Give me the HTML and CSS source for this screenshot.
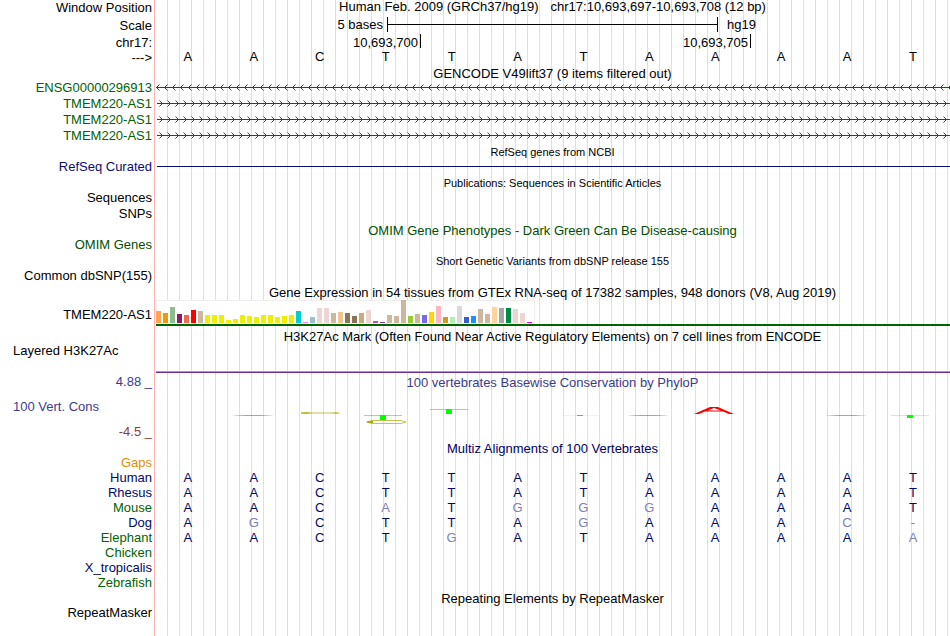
FILE: index.html
```
<!DOCTYPE html>
<html lang="en">
<head>
  <meta charset="UTF-8">
  <meta name="viewport" content="width=device-width, initial-scale=1.0">
  <title>Genome Browser - chr17:10,693,697-10,693,708</title>
  <link rel="stylesheet" href="styles.css">
</head>
<body>
<main class="browser">

  <!-- shared arrow patterns and gradients -->
  <svg class="defs" width="0" height="0">
    <defs>
      <pattern id="arrowLeft" width="8" height="16" patternUnits="userSpaceOnUse">
        <path d="M0 8h8v1H0z M2 7h1v1H2z M3 6h1v1H3z M2 9h1v1H2z M3 10h1v1H3z" fill="#006400"/>
        <path d="M4 5h1v1H4z M4 11h1v1H4z" fill="#006400" opacity=".5"/>
      </pattern>
      <pattern id="arrowRight" width="8" height="16" patternUnits="userSpaceOnUse">
        <path d="M0 8h8v1H0z M6 7h1v1H6z M5 6h1v1H5z M6 9h1v1H6z M5 10h1v1H5z" fill="#006400"/>
        <path d="M4 5h1v1H4z M4 11h1v1H4z" fill="#006400" opacity=".5"/>
      </pattern>
      <linearGradient id="redFade">
        <stop offset="0" stop-color="#f00" stop-opacity=".1"/>
        <stop offset=".3" stop-color="#f00" stop-opacity=".5"/>
        <stop offset=".7" stop-color="#f00" stop-opacity=".5"/>
        <stop offset="1" stop-color="#f00" stop-opacity=".1"/>
      </linearGradient>
      <linearGradient id="oliveFade">
        <stop offset="0" stop-color="#aa0" stop-opacity=".6"/>
        <stop offset=".15" stop-color="#aa0" stop-opacity=".8"/>
        <stop offset=".3" stop-color="#aa0" stop-opacity=".35"/>
        <stop offset=".8" stop-color="#aa0" stop-opacity=".35"/>
        <stop offset=".9" stop-color="#aa0" stop-opacity=".7"/>
        <stop offset="1" stop-color="#aa0" stop-opacity=".2"/>
      </linearGradient>
    </defs>
  </svg>

  <div class="row position">
    <div class="label">Window Position</div>
    <div class="track heading"><span>Human Feb. 2009 (GRCh37/hg19)</span><span>chr17:10,693,697-10,693,708 (12 bp)</span></div>
  </div>
  <div class="row scale">
    <div class="label">Scale</div>
    <div class="track halves">
      <span class="scale-text">5 bases</span>
      <span class="scale-bar"></span>
      <span class="scale-db">hg19</span>
    </div>
  </div>
  <div class="row">
    <div class="label">chr17:</div>
    <div class="track halves">
      <span class="coord first">10,693,700</span>
      <span class="coord">10,693,705</span>
      <span class="coord rest"></span>
    </div>
  </div>
  <div class="row sequence">
    <div class="label">---&gt;</div>
    <div class="track bases">
      <span>A</span><span>A</span><span>C</span><span>T</span><span>T</span><span>A</span><span>T</span><span>A</span><span>A</span><span>A</span><span>A</span><span>T</span>
    </div>
  </div>

  <h2 class="title">GENCODE V49lift37 (9 items filtered out)</h2>
  <div class="row">
    <div class="label gene">ENSG00000296913</div>
    <div class="track"><svg class="intron"><rect x="1" width="100%" height="16" fill="url(#arrowLeft)"/></svg></div>
  </div>
  <div class="row">
    <div class="label gene">TMEM220-AS1</div>
    <div class="track"><svg class="intron"><rect x="2" width="100%" height="16" fill="url(#arrowRight)"/></svg></div>
  </div>
  <div class="row">
    <div class="label gene">TMEM220-AS1</div>
    <div class="track"><svg class="intron"><rect x="2" width="100%" height="16" fill="url(#arrowRight)"/></svg></div>
  </div>
  <div class="row">
    <div class="label gene">TMEM220-AS1</div>
    <div class="track"><svg class="intron"><rect x="2" width="100%" height="16" fill="url(#arrowRight)"/></svg></div>
  </div>

  <h2 class="title small">RefSeq genes from NCBI</h2>
  <div class="row">
    <div class="label refseq">RefSeq Curated</div>
    <div class="track"><div class="refseq-line"></div></div>
  </div>

  <h2 class="title small">Publications: Sequences in Scientific Articles</h2>
  <div class="row"><div class="label">Sequences</div></div>
  <div class="row"><div class="label">SNPs</div></div>

  <h2 class="title omim">OMIM Gene Phenotypes - Dark Green Can Be Disease-causing</h2>
  <div class="row"><div class="label omim">OMIM Genes</div></div>

  <h2 class="title small">Short Genetic Variants from dbSNP release 155</h2>
  <div class="row"><div class="label">Common dbSNP(155)</div></div>

  <h2 class="title">Gene Expression in 54 tissues from GTEx RNA-seq of 17382 samples, 948 donors (V8, Aug 2019)</h2>
  <div class="row gtex">
    <div class="label">TMEM220-AS1</div>
    <div class="track">
      <svg class="gtex-chart" width="379" height="24" viewBox="0 0 379 24" shape-rendering="crispEdges">
        <rect width="379" height="24" fill="#eee"/>
        <rect x="1" y="1" width="377" height="22" fill="#fff"/>
        <rect x="0" y="11" width="5" height="12" fill="#ffa54f"/>
        <rect x="7" y="13" width="5" height="10" fill="#ee9a00"/>
        <rect x="14" y="7" width="5" height="16" fill="#8fbc8f"/>
        <rect x="21" y="14" width="5" height="9" fill="#8b1c62"/>
        <rect x="28" y="15" width="5" height="8" fill="#ee6a50"/>
        <rect x="35" y="10" width="5" height="13" fill="#ff0000"/>
        <rect x="42" y="11" width="5" height="12" fill="#cdb79e"/>
        <rect x="49" y="15" width="5" height="8" fill="#eeee00"/>
        <rect x="56" y="15" width="5" height="8" fill="#eeee00"/>
        <rect x="63" y="15" width="5" height="8" fill="#eeee00"/>
        <rect x="70" y="20" width="5" height="3" fill="#eeee00"/>
        <rect x="77" y="19" width="5" height="4" fill="#eeee00"/>
        <rect x="84" y="15" width="5" height="8" fill="#eeee00"/>
        <rect x="91" y="16" width="5" height="7" fill="#eeee00"/>
        <rect x="98" y="17" width="5" height="6" fill="#eeee00"/>
        <rect x="105" y="15" width="5" height="8" fill="#eeee00"/>
        <rect x="112" y="15" width="5" height="8" fill="#eeee00"/>
        <rect x="119" y="17" width="5" height="6" fill="#eeee00"/>
        <rect x="126" y="16" width="5" height="7" fill="#eeee00"/>
        <rect x="133" y="15" width="5" height="8" fill="#eeee00"/>
        <rect x="140" y="11" width="5" height="12" fill="#00cdcd"/>
        <rect x="147" y="22" width="5" height="1" fill="#ee82ee"/>
        <rect x="154" y="17" width="5" height="6" fill="#9ac0cd"/>
        <rect x="161" y="8" width="5" height="15" fill="#eed5d2"/>
        <rect x="168" y="8" width="5" height="15" fill="#eed5d2"/>
        <rect x="175" y="13" width="5" height="10" fill="#cdb79e"/>
        <rect x="182" y="12" width="5" height="11" fill="#eec591"/>
        <rect x="189" y="13" width="5" height="10" fill="#8b7355"/>
        <rect x="196" y="16" width="5" height="7" fill="#8b7355"/>
        <rect x="203" y="13" width="5" height="10" fill="#cdaa7d"/>
        <rect x="210" y="10" width="5" height="13" fill="#eed5d2"/>
        <rect x="217" y="21" width="5" height="2" fill="#b452cd"/>
        <rect x="224" y="22" width="5" height="1" fill="#7a378b"/>
        <rect x="231" y="15" width="5" height="8" fill="#cdb79e"/>
        <rect x="238" y="16" width="5" height="7" fill="#cdb79e"/>
        <rect x="245" y="0" width="5" height="23" fill="#cdb79e"/>
        <rect x="252" y="16" width="5" height="7" fill="#9acd32"/>
        <rect x="259" y="14" width="5" height="9" fill="#cdb79e"/>
        <rect x="266" y="15" width="5" height="8" fill="#7a67ee"/>
        <rect x="273" y="12" width="5" height="11" fill="#ffd700"/>
        <rect x="280" y="6" width="5" height="17" fill="#ffb6c1"/>
        <rect x="287" y="17" width="5" height="6" fill="#cd9b1d"/>
        <rect x="294" y="17" width="5" height="6" fill="#b4eeb4"/>
        <rect x="301" y="6" width="5" height="17" fill="#d9d9d9"/>
        <rect x="308" y="17" width="5" height="6" fill="#3a5fcd"/>
        <rect x="315" y="16" width="5" height="7" fill="#1e90ff"/>
        <rect x="322" y="9" width="5" height="14" fill="#cdb79e"/>
        <rect x="329" y="14" width="5" height="9" fill="#cdb79e"/>
        <rect x="336" y="7" width="5" height="16" fill="#ffd39b"/>
        <rect x="343" y="8" width="5" height="15" fill="#a6a6a6"/>
        <rect x="350" y="8" width="5" height="15" fill="#008b45"/>
        <rect x="357" y="9" width="5" height="14" fill="#eed5d2"/>
        <rect x="364" y="13" width="5" height="10" fill="#eed5d2"/>
        <rect x="371" y="22" width="5" height="1" fill="#ff00ff"/>
      </svg>
    </div>
  </div>

  <h2 class="title">H3K27Ac Mark (Often Found Near Active Regulatory Elements) on 7 cell lines from ENCODE</h2>
  <div class="row h3k27ac">
    <div class="label left">Layered H3K27Ac</div>
    <div class="track"></div>
  </div>

  <div class="row phylop">
    <div class="phylop-labels">
      <div class="label">4.88 _</div>
      <div class="label left">100 Vert. Cons</div>
      <div class="label min">-4.5 _</div>
    </div>
    <div>
      <h2 class="title inner">100 vertebrates Basewise Conservation by PhyloP</h2>
      <div class="bases">
        <span></span>
        <svg viewBox="0 0 66 51"><path d="M12 27h40v1H12z" fill="url(#redFade)"/></svg>
        <svg viewBox="0 0 66 51"><path d="M14 24h39v2H14z" fill="url(#oliveFade)"/></svg>
        <svg viewBox="0 0 66 51">
          <path d="M11 27h38v1H11z" fill="#0f0" opacity=".6"/>
          <path d="M27 27h6v5h-6z" fill="#0f0"/>
          <path d="M14 34L19 32.5H48L53 34L48 35.5H19z" fill="none" stroke="#aa0" stroke-opacity=".7"/>
          <path d="M13 34L16 33H20V35H16z" fill="#aa0"/>
        </svg>
        <svg viewBox="0 0 66 51">
          <path d="M11 21h38v1H11z" fill="#0f0" opacity=".6"/>
          <path d="M27 21h6v5h-6z" fill="#0f0"/>
        </svg>
        <span></span>
        <svg viewBox="0 0 66 51">
          <path d="M12 27h37v1H12z" fill="#0f0" opacity=".12"/>
          <path d="M27 27h6v1h-6z" fill="#0f0"/>
        </svg>
        <svg viewBox="0 0 66 51"><path d="M12 27h40v1H12z" fill="url(#redFade)"/></svg>
        <svg viewBox="0 0 66 51">
          <path d="M12 26L28 19H36L52 26H47L41 23.5H23L17 26z M26 22.5H39L32 20z" fill="#f00" fill-rule="evenodd"/>
        </svg>
        <span></span>
        <svg viewBox="0 0 66 51"><path d="M12 27h40v1H12z" fill="url(#redFade)"/></svg>
        <svg viewBox="0 0 66 51">
          <path d="M11 27h38v1H11z" fill="#0f0" opacity=".3"/>
          <path d="M27 27h6v3h-6z" fill="#0f0"/>
        </svg>
      </div>
    </div>
  </div>

  <h2 class="title multiz">Multiz Alignments of 100 Vertebrates</h2>
  <table class="alignment">
    <tbody>
      <tr><th class="gaps" scope="row">Gaps</th><td colspan="12"></td></tr>
      <tr><th scope="row">Human</th><td>A</td><td>A</td><td>C</td><td>T</td><td>T</td><td>A</td><td>T</td><td>A</td><td>A</td><td>A</td><td>A</td><td>T</td></tr>
      <tr><th scope="row">Rhesus</th><td>A</td><td>A</td><td>C</td><td>T</td><td>T</td><td>A</td><td>T</td><td>A</td><td>A</td><td>A</td><td>A</td><td>T</td></tr>
      <tr><th class="alt" scope="row">Mouse</th><td>A</td><td>A</td><td>C</td><td class="diff">A</td><td>T</td><td class="diff">G</td><td class="diff">G</td><td class="diff">G</td><td>A</td><td>A</td><td>A</td><td>T</td></tr>
      <tr><th scope="row">Dog</th><td>A</td><td class="diff">G</td><td>C</td><td>T</td><td>T</td><td>A</td><td class="diff">G</td><td>A</td><td>A</td><td>A</td><td class="diff">C</td><td class="diff">-</td></tr>
      <tr><th class="alt" scope="row">Elephant</th><td>A</td><td>A</td><td>C</td><td>T</td><td class="diff">G</td><td>A</td><td>T</td><td>A</td><td>A</td><td>A</td><td>A</td><td class="diff">A</td></tr>
      <tr><th class="alt" scope="row">Chicken</th><td colspan="12"></td></tr>
      <tr><th scope="row">X_tropicalis</th><td colspan="12"></td></tr>
      <tr><th class="alt" scope="row">Zebrafish</th><td colspan="12"></td></tr>
    </tbody>
  </table>

  <h2 class="title">Repeating Elements by RepeatMasker</h2>
  <div class="row"><div class="label">RepeatMasker</div></div>

</main>
</body>
</html>
```
FILE: styles.css
```
body {
  margin: 0;
  background: #fff;
  color: #000;
  font-family: "Liberation Sans", Arial, sans-serif;
  font-size: 13px;
  line-height: 18px;
}

/* red divider after the labels, then a guide line every 12px */
.browser {
  min-height: 100vh;
  background:
    linear-gradient(#ffb4b4, #ffb4b4) 154px 0 / 1px 100% no-repeat,
    repeating-linear-gradient(to right, #dcdcf5 0, #dcdcf5 1px, transparent 1px, transparent 12px) 167px 0 no-repeat;
}

.defs {
  display: block;
}

.row {
  display: grid;
  grid-template-columns: 155px 1fr;
  height: 16px;
}

.label {
  height: 16px;
  padding-right: 3px;
  text-align: right;
  white-space: nowrap;
}

.label.left {
  padding-left: 13px;
  text-align: left;
}

.title {
  box-sizing: border-box;
  height: 15px;
  margin: 0 0 0 155px;
  padding-top: 3px;
  font-size: 13px;
  font-weight: normal;
  line-height: 14px;
  text-align: center;
  white-space: nowrap;
}

.title.small {
  font-size: 11px;
  line-height: 12px;
}

.title.inner {
  margin-left: 0;
}

.position,
.sequence {
  line-height: 16px;
}

.heading {
  display: flex;
  justify-content: center;
  gap: 12px;
}

.heading,
.sequence .track {
  line-height: 14px;
}

/* two grid columns for each base */
.halves {
  display: grid;
  grid-template-columns: repeat(24, 1fr);
  padding: 0 2px 0 1px;
  text-align: right;
}

.scale {
  height: 18px;
}

.scale .label {
  line-height: 20px;
}

.scale-text {
  grid-column: span 7;
  padding-right: 4px;
}

.scale-bar {
  grid-column: span 10;
  height: 15px;
  margin: 1px -1px 0 0;
  border: solid #000;
  border-width: 0 1px;
  background: linear-gradient(#000, #000) 0 7px / 100% 1px no-repeat;
}

.scale-db {
  grid-column: span 7;
  padding-left: 10px;
  text-align: left;
}

.coord {
  grid-column: span 10;
  height: 14px;
  padding-right: 2px;
  border-left: 1px solid #000;
}

.coord.first {
  grid-column: span 8;
  border-left: none;
}

.coord.rest {
  grid-column: span 6;
}

.sequence {
  height: 14px;
}

.bases {
  display: grid;
  grid-template-columns: repeat(12, 1fr);
  padding-right: 4px;
  text-align: center;
}

.gene,
.alignment .alt {
  color: #006400;
}

.intron {
  display: block;
  width: 100%;
  height: 16px;
}

.refseq {
  color: #0c0c78;
}

.refseq-line {
  height: 1px;
  margin: 8px 0 0 2px;
  background: #0c0c78;
}

.omim {
  color: #005000;
}

.gtex {
  height: 29px;
  line-height: 34px;
}

.gtex .track {
  height: 26px;
  border-bottom: 2px solid #006400;
  margin-left: 1px;
}

.gtex-chart {
  display: block;
  margin-top: 2px;
}

.h3k27ac {
  height: 31px;
}

.h3k27ac .track {
  margin-left: 1px;
  border-bottom: 1px solid #6e2f91;
  box-shadow: inset 0 -1px #c77dff;
}

.phylop {
  height: 66px;
  color: #3c3c8c;
}

.phylop-labels {
  display: flex;
  flex-direction: column;
  justify-content: space-between;
}

.phylop .min {
  color: #8c3c3c;
}

.phylop svg {
  width: 100%;
  height: 51px;
}

.multiz {
  color: #000064;
}

.alignment {
  width: calc(100% - 4px);
  margin: 1px 0 -1px;
  table-layout: fixed;
  border-collapse: collapse;
  color: #000a64;
  line-height: 15px;
}

.alignment th {
  width: 152px;
  padding: 0 3px 0 0;
  font-weight: normal;
  text-align: right;
}

.alignment td {
  height: 15px;
  padding: 0;
  text-align: center;
}

.alignment .gaps {
  color: #e68c00;
}

.alignment .diff {
  color: #8080b1;
}
```
